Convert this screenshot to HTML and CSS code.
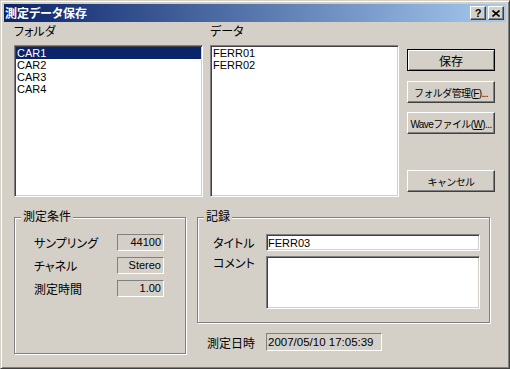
FILE: index.html
```html
<!DOCTYPE html>
<html lang="ja">
<head>
    <meta charset="UTF-8">
    <title>測定データ保存</title>
    <link rel="stylesheet" href="styles.css">
</head>
<body>
    <div class="window">
        <div class="titlebar">
            <span class="title">測定データ保存</span>
            <div class="caption-btns">
                <span class="cap-btn help">?</span>
                <span class="cap-btn">
                    <svg width="8" height="7" viewBox="0 0 8 7">
                        <path d="M0.5 0.5 L7.5 6.5 M7.5 0.5 L0.5 6.5" stroke="#000" stroke-width="1.6" fill="none"/>
                    </svg>
                </span>
            </div>
        </div>

        <div class="content">
            <div class="top">
                <div class="col">
                    <div class="col-label">フォルダ</div>
                    <ul class="listbox">
                        <li class="selected">CAR1</li>
                        <li>CAR2</li>
                        <li>CAR3</li>
                        <li>CAR4</li>
                    </ul>
                </div>
                <div class="col">
                    <div class="col-label">データ</div>
                    <ul class="listbox">
                        <li>FERR01</li>
                        <li>FERR02</li>
                    </ul>
                </div>
                <div class="actions">
                    <button class="btn default">保存</button>
                    <button class="btn">フォルダ管理(<u>F</u>)...</button>
                    <button class="btn">Waveファイル(<u>W</u>)...</button>
                    <button class="btn cancel">キャンセル</button>
                </div>
            </div>

            <div class="bottom">
                <fieldset class="group cond">
                    <legend>測定条件</legend>
                    <div class="group-body">
                        <div class="field-row">
                            <span class="field-label">サンプリング</span>
                            <span class="static">44100</span>
                        </div>
                        <div class="field-row">
                            <span class="field-label">チャネル</span>
                            <span class="static">Stereo</span>
                        </div>
                        <div class="field-row">
                            <span class="field-label">測定時間</span>
                            <span class="static">1.00</span>
                        </div>
                    </div>
                </fieldset>

                <div class="right">
                    <fieldset class="group record">
                        <legend>記録</legend>
                        <div class="group-body">
                            <div class="rec-row">
                                <span class="rec-label">タイトル</span>
                                <input class="edit" type="text" value="FERR03">
                            </div>
                            <div class="rec-row memo-row">
                                <span class="rec-label">コメント</span>
                                <textarea class="edit memo"></textarea>
                            </div>
                        </div>
                    </fieldset>
                    <div class="date-row">
                        <span class="date-label">測定日時</span>
                        <span class="static date">2007/05/10 17:05:39</span>
                    </div>
                </div>
            </div>
        </div>
    </div>
</body>
</html>
```

FILE: styles.css
```css
body {
    margin: 0;
    font-family: 'Liberation Sans', 'Noto Sans CJK JP', sans-serif;
    font-size: 12px;
    font-feature-settings: "palt";
    color: #000;
    background: #d4d0c8;
}

.window {
    width: 510px;
    height: 369px;
    box-sizing: border-box;
    background: #d4d0c8;
    border: 1px solid;
    border-color: #d4d0c8 #404040 #404040 #d4d0c8;
    box-shadow: inset 1px 1px #fff, inset -1px -1px #808080;
    padding: 3px;
    display: flex;
    flex-direction: column;
}

/* title bar */
.titlebar {
    height: 18px;
    background: linear-gradient(to right, #0a246a, #a6caf0);
    display: flex;
    align-items: center;
    justify-content: space-between;
    padding: 0 2px 0 1px;
}

.title {
    color: #fff;
    font-weight: bold;
    line-height: 18px;
    font-family: 'Noto Sans CJK JP', sans-serif;
}

.caption-btns {
    display: flex;
    gap: 2px;
}

.cap-btn {
    width: 16px;
    height: 14px;
    box-sizing: border-box;
    background: #d4d0c8;
    border: 1px solid;
    border-color: #fff #404040 #404040 #fff;
    box-shadow: inset -1px -1px #808080;
    display: flex;
    align-items: center;
    justify-content: center;
}

.cap-btn.help {
    font-weight: bold;
    font-size: 11px;
    line-height: 12px;
}

/* dialog body */
.content {
    flex: 1;
    padding: 0 10px;
    display: flex;
    flex-direction: column;
}

.top {
    display: flex;
    height: 175px;
}

.col {
    width: 189px;
    display: flex;
    flex-direction: column;
}

.col + .col {
    margin-left: 7px;
}

.col-label {
    height: 23px;
    line-height: 20px;
}

.listbox {
    flex: 1;
    margin: 0;
    padding: 1px;
    list-style: none;
    background: #fff;
    border: 1px solid;
    border-color: #808080 #fff #fff #808080;
    box-shadow: inset 1px 1px #404040, inset -1px -1px #d4d0c8;
}

.listbox li {
    height: 12px;
    line-height: 12px;
    padding-left: 1px;
    font-size: 11px;
}

.listbox li.selected {
    background: #0a246a;
    color: #fff;
}

.actions {
    margin-left: 8px;
    width: 88px;
    display: flex;
    flex-direction: column;
    gap: 9px;
    padding: 27px 0 5px;
}

.btn {
    height: 22px;
    margin: 0;
    padding: 0;
    font-family: inherit;
    font-size: 10px;
    letter-spacing: -0.6px;
    color: #000;
    background: #d4d0c8;
    border: 1px solid;
    border-color: #fff #404040 #404040 #fff;
    box-shadow: inset -1px -1px #808080;
    white-space: nowrap;
}

.btn.default {
    font-size: 12px;
    letter-spacing: 0;
    border-color: #000;
    box-shadow: inset 1px 1px #fff, inset -1px -1px #808080;
    margin-bottom: 1px;
}

.btn.cancel {
    margin-top: auto;
}

/* lower part */
.bottom {
    display: flex;
    gap: 11px;
    margin-top: 13px;
}

.group {
    margin: 0;
    padding: 0;
    min-width: 0;
    box-sizing: border-box;
    border: 1px solid #808080;
    box-shadow: inset 1px 1px #fff, 1px 1px #fff;
}

.group legend {
    padding: 0 2px;
    margin-left: 6px;
    line-height: 15px;
    background: #d4d0c8;
}

.cond {
    width: 172px;
    height: 144px;
}

.cond .group-body {
    padding: 9px 0 0 19px;
}

.field-row {
    display: flex;
    align-items: center;
    height: 17px;
    margin-bottom: 6px;
}

.field-label {
    width: 83px;
}

.static {
    box-sizing: border-box;
    width: 47px;
    height: 17px;
    border: 1px solid;
    border-color: #808080 #fff #fff #808080;
    text-align: right;
    padding-right: 2px;
    line-height: 15px;
    font-size: 11px;
}

.right {
    width: 293px;
    display: flex;
    flex-direction: column;
}

.record {
    height: 113px;
}

.record .group-body {
    padding: 9px 0 0 15px;
}

.rec-row {
    display: flex;
    align-items: center;
}

.memo-row {
    align-items: flex-start;
    margin-top: 5px;
}

.rec-label {
    width: 53px;
}

.memo-row .rec-label {
    line-height: 16px;
}

.edit {
    box-sizing: border-box;
    width: 214px;
    height: 17px;
    margin: 0;
    padding: 0 1px;
    font-family: inherit;
    font-size: 11px;
    background: #fff;
    border: 1px solid;
    border-color: #808080 #fff #fff #808080;
    box-shadow: inset 1px 1px #404040, inset -1px -1px #d4d0c8;
    outline: none;
}

.memo {
    height: 53px;
    resize: none;
}

.date-row {
    display: flex;
    align-items: center;
    margin-top: 10px;
    padding-left: 10px;
}

.date-label {
    width: 59px;
}

.static.date {
    width: 116px;
    height: 18px;
    line-height: 16px;
    text-align: left;
    padding: 0 0 0 1px;
    font-size: 11.5px;
}
```
